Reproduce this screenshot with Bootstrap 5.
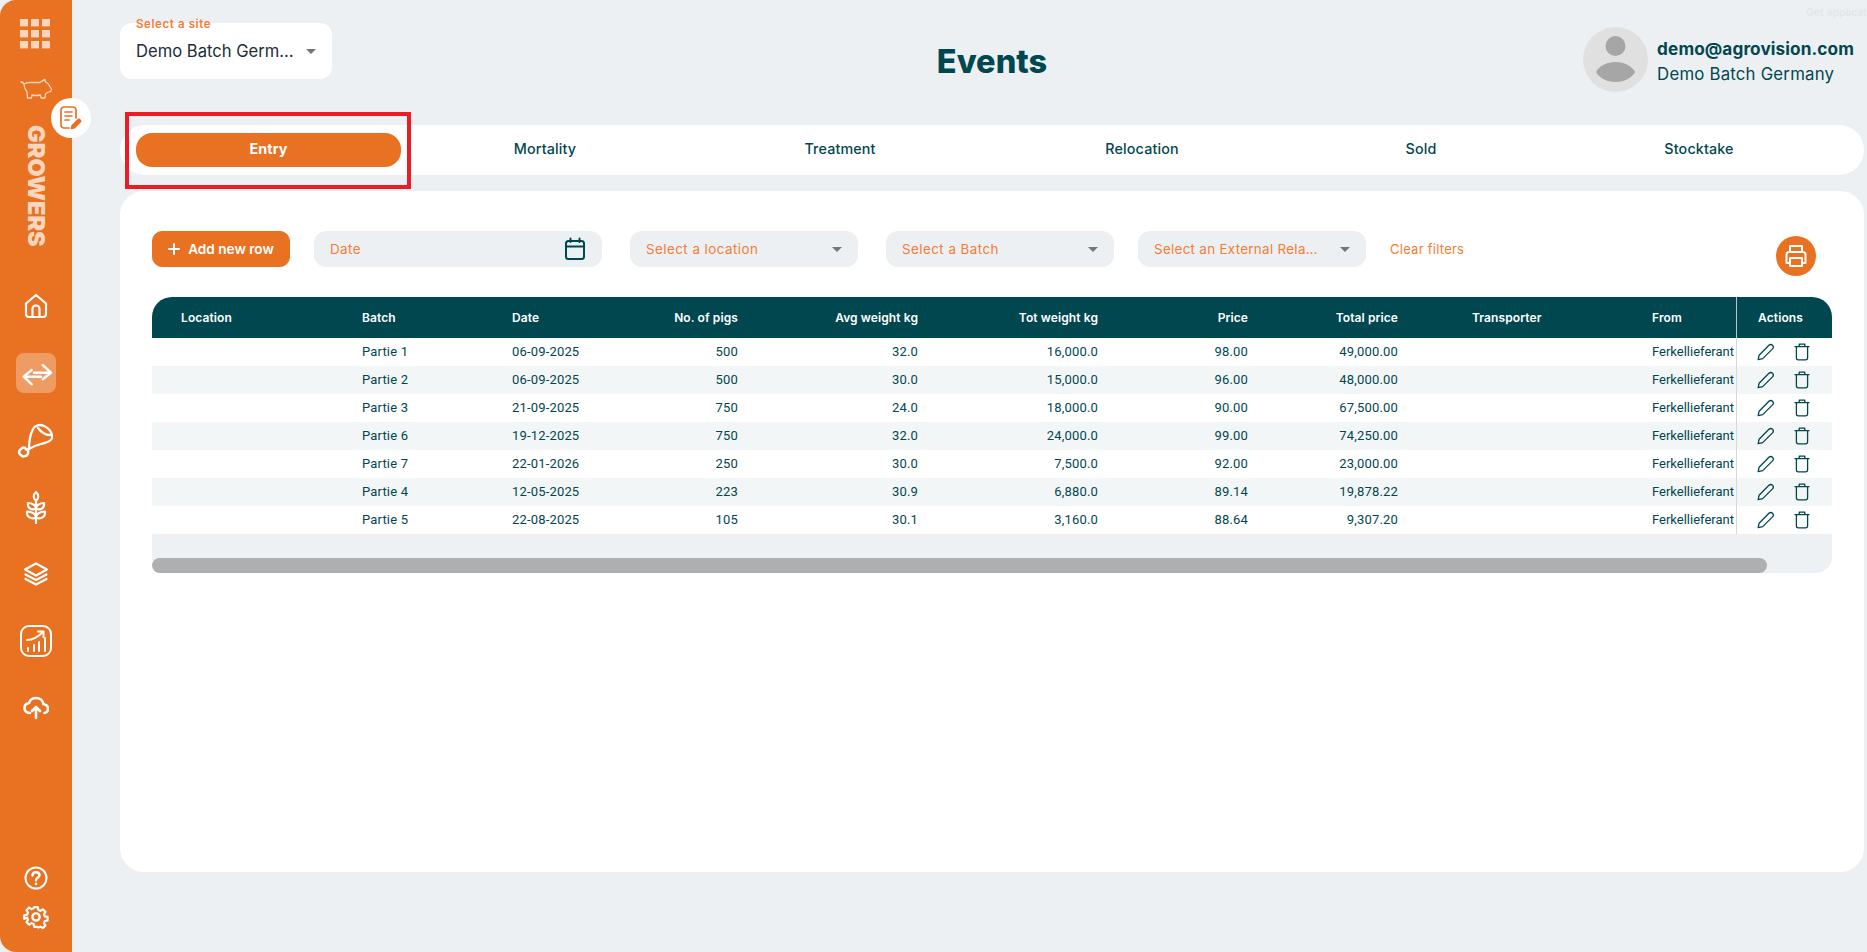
<!DOCTYPE html>
<html lang="en">
<head>
<meta charset="utf-8">
<title>Events</title>
<link rel="stylesheet" href="https://cdn.jsdelivr.net/npm/bootstrap@5.3.0/dist/css/bootstrap.min.css">
<style>
:root{--org:#e97122;--teal:#01474f;--pg:#edf0f3;--ph:#f47c36;--peach:#fbd5bc}
html,body{height:100%}
body{background:var(--pg);font-family:Inter,"Open Sans",sans-serif;color:var(--teal);overflow:hidden;width:1867px;height:952px;position:relative}
.shell{height:952px}
.side{width:72px;height:952px;background:var(--org);border-radius:16px 0 0 16px;flex:none;position:relative}
.side-top{height:121px;padding-top:19px}
.pig-ico{margin-top:29px}
.grow-word{writing-mode:vertical-rl;font:900 23.500px/24px Inter,sans-serif;color:var(--peach);height:130px;text-align:center;margin-bottom:35px}
.side-ico{width:40px;height:40px;margin-bottom:27px;border-radius:8px}
.side-ico.on{background:rgba(255,255,255,.3)}
.side-ico svg,.side-foot svg{fill:none;stroke:#fff;stroke-width:2;stroke-linecap:round;stroke-linejoin:round}
.side-foot{margin-top:auto;padding-bottom:22px;gap:14px}
.doc-bubble{position:absolute;left:51px;top:98px;width:40px;height:40px;border-radius:50%;background:#fff;z-index:3}
.main-col{padding:23px 3px 0 48px;width:1795px}
.top-row{display:grid;grid-template-columns:1fr auto 1fr;height:102px}
.site-box{width:212px;height:56px;background:#fff;border-radius:12px;position:relative;padding-left:16px;padding-top:1px;font-size:16.600px;color:#1d2b3a;white-space:nowrap}
.float-lab{position:absolute;left:16px;top:-6px;font-size:11.500px;font-weight:600;color:var(--ph);letter-spacing:.6px;line-height:14px}
.caret-dn{width:0;height:0;border-left:5.500px solid transparent;border-right:5.500px solid transparent;border-top:5px solid #757575;flex:none}
.page-ttl{font-size:32.500px;font-weight:800;margin:0;line-height:36px;padding-top:21px;color:var(--teal)}
.me{justify-self:end;padding-right:10px;padding-top:4px;gap:10px}
.me-pic{width:65px;height:65px;border-radius:50%;background:#e0e0e0;flex:none;margin-right:-1px}
.me-info{padding-top:12px}
.me-mail{font-size:17.200px;font-weight:700;line-height:20px;letter-spacing:.1px;white-space:nowrap}
.me-site{font-size:16.800px;line-height:20px;margin-top:5px;letter-spacing:.2px;white-space:nowrap}
.tabbar{height:50px;background:#fff;border-radius:25px;padding:8px 0 8px 16px;display:grid;grid-template-columns:265px 288px 302px 302px 256px 300px;margin-bottom:16px;font-size:14.300px;font-weight:500}
.tabbar span{text-align:center;line-height:32px;letter-spacing:.15px}
.tabbar .act{background:var(--org);color:#fff;border-radius:16px;font-weight:700}
.mark-red{position:absolute;left:125px;top:112px;width:286px;height:77px;border:4px solid #ed1c24;z-index:4;pointer-events:none}
.sheet{height:681px;background:#fff;border-radius:24px;padding:40px 32px 0}
.tools{height:66px;align-items:flex-start}
.add-btn{--bs-btn-bg:var(--org);--bs-btn-border-color:var(--org);--bs-btn-color:#fff;--bs-btn-hover-bg:var(--org);--bs-btn-hover-color:#fff;width:138px;height:36px;border-radius:10px;font-size:13.600px;font-weight:600;padding:0;margin-right:24px;white-space:nowrap}
.fld{height:36px;background:var(--pg);border-radius:12px;font-size:13.400px;color:var(--ph);padding:0 16px;letter-spacing:.45px;width:228px;white-space:nowrap}
.fld.dt{width:288px;margin-right:28px}
.fld.lc{margin-right:28px}
.fld.bt{margin-right:24px}
.fld.ex{letter-spacing:.3px}
.clear-f{font-size:13px;color:var(--ph);margin-left:24px;line-height:36px;letter-spacing:.25px;text-decoration:none}
.print-b{position:absolute;left:1776px;top:236px;width:40px;height:40px;border-radius:50%;background:var(--org);border:0;padding:0}
table.grid-t{table-layout:fixed;width:1680px;margin:0;border-collapse:separate;border-spacing:0}
.grid-t th{background:var(--teal);color:#fff;height:41px;font-size:12px;font-weight:600;padding:1px 0 0;border:0;vertical-align:middle;letter-spacing:.1px;white-space:nowrap}
.grid-t th:first-child{border-top-left-radius:20px;padding-left:29px}
.grid-t th:last-child{border-top-right-radius:20px;text-align:center;border-left:1px solid #b9c6c9;padding-right:8px}
.grid-t td{height:28px;font:400 13px/28px Roboto,sans-serif;color:var(--teal);padding:0;border:0;background:#fff;white-space:nowrap;letter-spacing:.17px;vertical-align:middle}
.grid-t td:nth-child(10){letter-spacing:0}
.grid-t tbody tr:nth-child(even) td{background:#f3f6f7}
.grid-t td:last-child{border-left:1px solid #d5d9db}
.grid-t .pad-tr{padding-left:74px}
.act-ico{padding-left:20px;gap:19px}
.act-ico svg{fill:none;stroke:var(--teal);stroke-width:1.300;stroke-linecap:round;stroke-linejoin:round}
.track{height:39px;background:#eef1f4;border-radius:0 0 16px 16px;padding-top:24px}
.thumb{height:15px;width:1615px;background:#adafb1;border-radius:8px}
.faint{position:absolute;left:1806px;top:5px;font-size:10.500px;font-weight:600;color:#e3e6e9;white-space:nowrap}
</style>
</head>
<body>
<svg width="0" height="0" class="position-absolute">
  <symbol id="pen" viewBox="0 0 18 18"><path d="M1.200 16.600l.9-4.400L11.900 2.300c1-1 2.600-1 3.600 0s1 2.600 0 3.600L5.700 15.600z"/></symbol>
  <symbol id="bin" viewBox="0 0 16 18"><path d="M5.200 3.600V1.200h5.600v2.400M1 3.600h14M2.400 3.600v11.200c0 1.200.9 2 2 2h7.200c1.100 0 2-.8 2-2V3.600"/></symbol>
</svg>

<div class="faint">Get application</div>
<div class="mark-red"></div>

<div class="shell d-flex">
  <aside class="side d-flex flex-column align-items-center">
    <div class="side-top">
      <svg width="30" height="30" viewBox="0 0 30 30" fill="#fbd5bc" class="d-block"><rect x="0" y="0" width="8" height="7.400"/><rect x="11" y="0" width="8" height="7.400"/><rect x="22" y="0" width="8" height="7.400"/><rect x="0" y="11" width="8" height="7.400"/><rect x="11" y="11" width="8" height="7.400"/><rect x="22" y="11" width="8" height="7.400"/><rect x="0" y="22" width="8" height="7.400"/><rect x="11" y="22" width="8" height="7.400"/><rect x="22" y="22" width="8" height="7.400"/></svg>
      <svg width="33" height="23" viewBox="0 0 33 23" fill="none" stroke="#fbd5bc" stroke-width="1.300" stroke-linejoin="round" stroke-linecap="round" class="d-block pig-ico"><path d="M1 4c1.500 0 2.500 1 3 2 1-.8 3-1.500 6-1.500h10c1.500-1 3-2.500 5-3l.5 2.500c2 .8 3.500 2.500 5 5.500l1 1.500-.8 2.500-3.500 1-1.800 1.500-.4 4h-4l-.5-3c-2.500.6-6 .6-8.500 0l-.5 3H7.500L7 14C4.500 11 4 9 4 6"/></svg>
    </div>
    <div class="grow-word">GROWERS</div>
    <div class="side-ico d-flex align-items-center justify-content-center">
      <svg width="26" height="26" viewBox="0 0 26 26" style="stroke-width:2.200"><path d="M3 10.500 13 2l10 8.500V21c0 1.700-1.300 3-3 3H6c-1.700 0-3-1.300-3-3zM9.500 24v-8c0-2 1.500-3.500 3.500-3.500s3.500 1.500 3.500 3.500v8"/></svg>
    </div>
    <div class="side-ico on d-flex align-items-center justify-content-center">
      <svg width="40" height="40" viewBox="0 0 40 40" style="stroke-width:2.400"><path d="M26.700 12l8.300 7.700-8.300 6.600M35 19.700H18M15.700 17l-8 6.700 8 7.600M7.700 23.700H25"/></svg>
    </div>
    <div class="side-ico d-flex align-items-center justify-content-center">
      <svg width="40" height="40" viewBox="5 5 40 40" style="stroke-width:2.300"><path d="M22 14c2-4 7-5 11-3 5 2 9 7 8 12-1 4-7 5-11 6-4 1-9 3-12 5 0-4 1-14 4-20z"/><path d="M27 13c3 4 8 7 12 7"/><path d="M18 34l-3 .5"/><path d="M11 33a3 3 0 0 1 4 1 3 3 0 0 1 2 4 3 3 0 0 1-3 3 3 3 0 0 1-4-1 3 3 0 0 1-1-5z" style="stroke-width:2.500"/></svg>
    </div>
    <div class="side-ico d-flex align-items-center justify-content-center">
      <svg width="24" height="34" viewBox="0 0 24 34" style="stroke-width:2.200"><path d="M12 33V11M12 2c3 2.500 3 6.500 0 9-3-2.500-3-6.500 0-9zM12 19c0-3.500-3.500-6-8-6-.8 4 2 7.500 8 6zM12 19c0-3.500 3.500-6 8-6 .8 4-2 7.500-8 6zM12 28c0-3.500-3.500-6.500-9-6.500-.6 5 3 8 9 6.500zM12 28c0-3.500 3.500-6.500 9-6.500 .6 5-3 8-9 6.500z"/></svg>
    </div>
    <div class="side-ico d-flex align-items-center justify-content-center">
      <svg width="26" height="24" viewBox="0 0 26 24" style="stroke-width:2.200"><path d="M13 1.500 24 7.500l-11 6-11-6zM2.500 12.500l10.500 5.500 10.500-5.500M2.500 17l10.500 5.500L23.500 17"/></svg>
    </div>
    <div class="side-ico d-flex align-items-center justify-content-center">
      <svg width="34" height="34" viewBox="0 0 34 34"><rect x="2" y="2" width="30" height="30" rx="8"/><path d="M8 16c6 0 11-3 16-8M19 7.500h5.500V13M9 27v-3M15 27v-6M20 27v-9M26 27V14"/></svg>
    </div>
    <div class="side-ico d-flex align-items-center justify-content-center">
      <svg width="26" height="24" viewBox="0 0 26 24" style="stroke-width:2.600"><path d="M7 17c-3 0-5.500-1.800-5.500-5 0-2.800 2-4.700 4.500-5C7 4 9.700 2 13 2c4 0 7 2.700 7.500 6.300 2.500.3 4.500 2 4.500 4.600 0 2.300-1.500 3.800-3.500 4.100M13 22V11M9 15l4-4 4 4"/></svg>
    </div>
    <div class="side-foot d-flex flex-column align-items-center">
      <svg width="24" height="24" viewBox="0 0 24 24"><circle cx="12" cy="12" r="10.500"/><path d="M8.500 9.500c0-2 1.500-3.300 3.500-3.300s3.500 1.300 3.500 3c0 2.600-3.500 2.600-3.500 5.100" stroke-width="2.400"/><path d="M12 17.800v.2" stroke-width="2.600"/></svg>
      <svg width="26" height="26" viewBox="0 0 26 26" style="stroke-width:2.400"><circle cx="13" cy="13" r="3.600"/><path d="M11 2h4l.6 3.100 2.300 1 2.700-1.700 2.900 2.900-1.700 2.700 1 2.300 3.100.6v4l-3.100.6-1 2.300 1.700 2.700-2.900 2.900-2.700-1.700-2.300 1L15 24h-4l-.6-3.100-2.300-1-2.700 1.700-2.900-2.900 1.700-2.700-1-2.300L0 15v-4l3.100-.6 1-2.300-1.700-2.700L5.300 2.500 8 4.200l2.300-1z" transform="translate(1.300 1.300) scale(.9)"/></svg>
    </div>
    <div class="doc-bubble d-flex align-items-center justify-content-center">
      <svg width="22" height="24" viewBox="0 0 22 24" fill="none" stroke="#e97122" stroke-width="1.700" stroke-linecap="round" stroke-linejoin="round"><path d="M9 22H4c-1.600 0-3-1.400-3-3V4c0-1.600 1.400-3 3-3h9c1.600 0 3 1.400 3 3v8"/><path d="M5 6h7M5 10h7M5 14h4"/><path d="M11.500 22.500l.7-3 6-6c.8-.8 3 1.400 2.200 2.200l-6 6z" fill="#e97122"/></svg>
    </div>
  </aside>

  <main class="main-col">
    <header class="top-row">
      <div>
        <div class="site-box d-flex align-items-center gap-1">
          <span class="float-lab">Select a site</span>
          <span class="flex-grow-1">Demo Batch Germ…</span>
          <i class="caret-dn me-3"></i>
        </div>
      </div>
      <h1 class="page-ttl">Events</h1>
      <div class="me d-flex align-items-start">
        <div class="me-pic">
          <svg width="65" height="65" viewBox="0 0 65 65"><circle cx="32.500" cy="19" r="10" fill="#a6a6a6"/><path d="M13 45c3-6 11-10 19.500-10S49 39 52 45c-3 6-11 10-19.500 10S16 51 13 45z" fill="#a6a6a6"/></svg>
        </div>
        <div class="me-info">
          <div class="me-mail">demo@agrovision.com</div>
          <div class="me-site">Demo Batch Germany</div>
        </div>
      </div>
    </header>

    <nav class="tabbar">
      <span class="act">Entry</span><span>Mortality</span><span>Treatment</span><span>Relocation</span><span>Sold</span><span>Stocktake</span>
    </nav>

    <section class="sheet">
      <div class="tools d-flex">
        <button class="btn add-btn d-flex align-items-center justify-content-center gap-2" type="button">
          <svg width="12" height="12" viewBox="0 0 12 12" stroke="#fff" stroke-width="2" stroke-linecap="round"><path d="M6 1v10M1 6h10"/></svg>Add new row
        </button>
        <div class="fld dt d-flex align-items-center justify-content-between">
          <span>Date</span>
          <svg width="22" height="24" viewBox="0 0 22 24" fill="none" stroke="#01474f" stroke-width="2" stroke-linecap="round" stroke-linejoin="round"><rect x="2" y="4" width="18" height="18" rx="2.500"/><path d="M2 9.500h18M6.500 1.500V5M15.500 1.500V5"/></svg>
        </div>
        <div class="fld lc d-flex align-items-center justify-content-between"><span>Select a location</span><i class="caret-dn"></i></div>
        <div class="fld bt d-flex align-items-center justify-content-between"><span>Select a Batch</span><i class="caret-dn"></i></div>
        <div class="fld ex d-flex align-items-center justify-content-between"><span>Select an External Rela…</span><i class="caret-dn"></i></div>
        <a class="clear-f" href="#">Clear filters</a>
      </div>
      <button class="print-b d-flex align-items-center justify-content-center" type="button" aria-label="Print">
        <svg width="24" height="24" viewBox="0 0 24 24" fill="none" stroke="#fff" stroke-width="2" stroke-linejoin="round"><path d="M6 8V2h12v6M6 19H2.500v-8.500c0-1.300 1-2.500 2.500-2.500h14c1.500 0 2.500 1.200 2.500 2.500V19H18"/><rect x="6" y="14" width="12" height="8"/></svg>
      </button>

      <table class="grid-t table">
        <colgroup><col style="width:210px"><col style="width:150px"><col style="width:88px"><col style="width:138px"><col style="width:180px"><col style="width:180px"><col style="width:150px"><col style="width:150px"><col style="width:254px"><col style="width:84px"><col style="width:96px"></colgroup>
        <thead><tr>
          <th>Location</th><th>Batch</th><th>Date</th><th class="text-end">No. of pigs</th><th class="text-end">Avg weight kg</th><th class="text-end">Tot weight kg</th><th class="text-end">Price</th><th class="text-end">Total price</th><th class="pad-tr">Transporter</th><th>From</th><th>Actions</th>
        </tr></thead>
        <tbody>
          <tr><td></td><td>Partie 1</td><td>06-09-2025</td><td class="text-end">500</td><td class="text-end">32.0</td><td class="text-end">16,000.0</td><td class="text-end">98.00</td><td class="text-end">49,000.00</td><td></td><td>Ferkellieferant</td><td><div class="act-ico d-flex align-items-center"><svg width="18" height="18"><use href="#pen"/></svg><svg width="16" height="18"><use href="#bin"/></svg></div></td></tr>
          <tr><td></td><td>Partie 2</td><td>06-09-2025</td><td class="text-end">500</td><td class="text-end">30.0</td><td class="text-end">15,000.0</td><td class="text-end">96.00</td><td class="text-end">48,000.00</td><td></td><td>Ferkellieferant</td><td><div class="act-ico d-flex align-items-center"><svg width="18" height="18"><use href="#pen"/></svg><svg width="16" height="18"><use href="#bin"/></svg></div></td></tr>
          <tr><td></td><td>Partie 3</td><td>21-09-2025</td><td class="text-end">750</td><td class="text-end">24.0</td><td class="text-end">18,000.0</td><td class="text-end">90.00</td><td class="text-end">67,500.00</td><td></td><td>Ferkellieferant</td><td><div class="act-ico d-flex align-items-center"><svg width="18" height="18"><use href="#pen"/></svg><svg width="16" height="18"><use href="#bin"/></svg></div></td></tr>
          <tr><td></td><td>Partie 6</td><td>19-12-2025</td><td class="text-end">750</td><td class="text-end">32.0</td><td class="text-end">24,000.0</td><td class="text-end">99.00</td><td class="text-end">74,250.00</td><td></td><td>Ferkellieferant</td><td><div class="act-ico d-flex align-items-center"><svg width="18" height="18"><use href="#pen"/></svg><svg width="16" height="18"><use href="#bin"/></svg></div></td></tr>
          <tr><td></td><td>Partie 7</td><td>22-01-2026</td><td class="text-end">250</td><td class="text-end">30.0</td><td class="text-end">7,500.0</td><td class="text-end">92.00</td><td class="text-end">23,000.00</td><td></td><td>Ferkellieferant</td><td><div class="act-ico d-flex align-items-center"><svg width="18" height="18"><use href="#pen"/></svg><svg width="16" height="18"><use href="#bin"/></svg></div></td></tr>
          <tr><td></td><td>Partie 4</td><td>12-05-2025</td><td class="text-end">223</td><td class="text-end">30.9</td><td class="text-end">6,880.0</td><td class="text-end">89.14</td><td class="text-end">19,878.22</td><td></td><td>Ferkellieferant</td><td><div class="act-ico d-flex align-items-center"><svg width="18" height="18"><use href="#pen"/></svg><svg width="16" height="18"><use href="#bin"/></svg></div></td></tr>
          <tr><td></td><td>Partie 5</td><td>22-08-2025</td><td class="text-end">105</td><td class="text-end">30.1</td><td class="text-end">3,160.0</td><td class="text-end">88.64</td><td class="text-end">9,307.20</td><td></td><td>Ferkellieferant</td><td><div class="act-ico d-flex align-items-center"><svg width="18" height="18"><use href="#pen"/></svg><svg width="16" height="18"><use href="#bin"/></svg></div></td></tr>
        </tbody>
      </table>
      <div class="track"><div class="thumb"></div></div>
    </section>
  </main>
</div>
<script src="https://cdn.jsdelivr.net/npm/bootstrap@5.3.0/dist/js/bootstrap.bundle.min.js"></script>
</body>
</html>
